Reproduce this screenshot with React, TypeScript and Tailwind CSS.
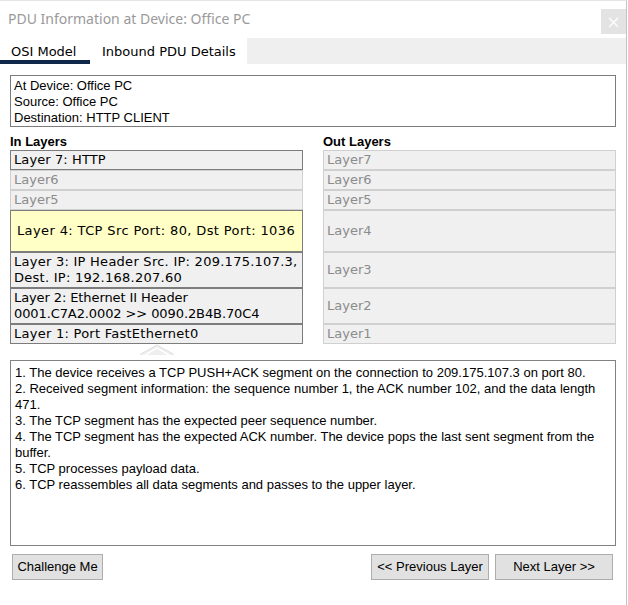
import React from "react";

const inLayers = [
  { h: "h-[20px]", text: ["Layer 7: HTTP"], active: true, track: "tracking-[0.1px]" },
  { h: "h-[20px]", text: ["Layer6"], active: false, track: "" },
  { h: "h-[20px]", text: ["Layer5"], active: false, track: "" },
  { h: "h-[42px]", text: ["Layer 4: TCP Src Port: 80, Dst Port: 1036"], active: true, current: true, track: "tracking-[0.38px]" },
  { h: "h-[36px]", text: ["Layer 3: IP Header Src. IP: 209.175.107.3,", "Dest. IP: 192.168.207.60"], active: true, track: "tracking-[0.26px]" },
  { h: "h-[36px]", text: ["Layer 2: Ethernet II Header", "0001.C7A2.0002 >> 0090.2B4B.70C4"], active: true, track: "tracking-[-0.1px]" },
  { h: "h-[20px]", text: ["Layer 1: Port FastEthernet0"], active: true, track: "tracking-[0.26px]" },
];

const outLayers = [
  { h: "h-[20px]", label: "Layer7" },
  { h: "h-[20px]", label: "Layer6" },
  { h: "h-[20px]", label: "Layer5" },
  { h: "h-[42px]", label: "Layer4" },
  { h: "h-[36px]", label: "Layer3" },
  { h: "h-[36px]", label: "Layer2" },
  { h: "h-[20px]", label: "Layer1" },
];

const steps = [
  "1. The device receives a TCP PUSH+ACK segment on the connection to 209.175.107.3 on port 80.",
  "2. Received segment information: the sequence number 1, the ACK number 102, and the data length 471.",
  "3. The TCP segment has the expected peer sequence number.",
  "4. The TCP segment has the expected ACK number. The device pops the last sent segment from the buffer.",
  "5. TCP processes payload data.",
  "6. TCP reassembles all data segments and passes to the upper layer.",
];

const arial = "font-['Liberation_Sans',Arial,sans-serif]";
const verdana = "font-['DejaVu_Sans',Verdana,sans-serif]";

export default function App() {
  return (
    <div className="w-[628px] h-[605px] bg-white overflow-hidden">
      <div className="w-[627px] h-[605px] border-r border-[#c4c4c4] border-t border-t-[#e6e6e6] bg-white flex flex-col">
        {/* Title bar */}
        <div className="h-[37px] flex items-start justify-between">
          <span className="pl-[8px] pt-[8px] text-[14px] leading-[20px] text-[#9a9a9a] font-['Noto_Sans',sans-serif]">
            PDU Information at Device: Office PC
          </span>
          <div className="mt-[8px] w-[25px] h-[25px] bg-[#e3e3e3] flex items-center justify-center text-[#fafafa] text-[18px] leading-none font-['DejaVu_Sans',sans-serif]">
            ×
          </div>
        </div>

        {/* Tabs */}
        <div className={`h-[26px] flex bg-[#efefef] ${verdana} text-[13px] text-black`}>
          <div className="w-[90px] bg-white flex flex-col">
            <span className="pl-[11px] pt-[6px] leading-[16px] flex-1">OSI Model</span>
            <div className="h-[4px] bg-[#0f2748]" />
          </div>
          <div className="w-[157px] bg-white pl-[12px] pt-[6px] leading-[16px]">Inbound PDU Details</div>
        </div>

        {/* Info box */}
        <div className={`mt-[11px] ml-[10px] w-[606px] h-[52px] border border-[#7c7c7c] pl-[3px] pt-[2px] ${arial} text-[13px] leading-[16px] text-black`}>
          <div>At Device: Office PC</div>
          <div>Source: Office PC</div>
          <div>Destination: HTTP CLIENT</div>
        </div>

        {/* Layers */}
        <div className="mt-[7px] ml-[10px] flex gap-[20px]">
          <div className="w-[293px] flex flex-col">
            <div className={`${arial} font-bold text-[13px] leading-[16px] h-[16px] text-black`}>In Layers</div>
            {inLayers.map((l, i) => (
              <div
                key={i}
                className={`${l.h} border ${verdana} ${l.track} text-[13px] leading-[16px] flex flex-col justify-center ${
                  l.current
                    ? "bg-[#ffffc6] border-[#7c7c7c] text-black pl-[6px]"
                    : l.active
                    ? "bg-[#f0f0f0] border-[#7c7c7c] text-black pl-[3px]"
                    : "bg-[#f0f0f0] border-[#d0d0d0] text-[#8c8c8c] pl-[3px]"
                }`}
              >
                {l.text.map((t) => (
                  <span key={t} className="whitespace-nowrap">
                    {t}
                  </span>
                ))}
              </div>
            ))}
            <div className="h-[11px] flex justify-center">
              <svg width="34" height="11" viewBox="0 0 34 11">
                <polygon points="0,11 17,1 34,11" fill="#eeeeee" />
                <polyline points="0,10.5 17,1 34,10.5" fill="none" stroke="#dddddd" strokeWidth="1" />
                <polyline points="5,11 17,4 29,11" fill="none" stroke="#ffffff" strokeWidth="1.5" />
              </svg>
            </div>
          </div>
          <div className="w-[293px] flex flex-col">
            <div className={`${arial} font-bold text-[13px] leading-[16px] h-[16px] text-black`}>Out Layers</div>
            {outLayers.map((l) => (
              <div
                key={l.label}
                className={`${l.h} border border-[#d0d0d0] bg-[#f0f0f0] ${verdana} text-[13px] leading-[16px] text-[#8c8c8c] pl-[3px] flex items-center`}
              >
                {l.label}
              </div>
            ))}
          </div>
        </div>

        {/* Description */}
        <div className={`mt-[5px] ml-[10px] w-[606px] h-[186px] border border-[#828282] pl-[4px] pr-[4px] pt-[4px] ${arial} text-[13px] leading-[16px] text-black`}>
          {steps.map((s) => (
            <div key={s}>{s}</div>
          ))}
        </div>

        {/* Buttons */}
        <div className={`mt-[8px] ml-[12px] mr-[13px] flex ${arial} text-[13px] text-black`}>
          <button className="w-[91px] h-[26px] bg-[#e1e1e1] border border-[#adadad]">Challenge Me</button>
          <div className="flex-1" />
          <button className="w-[118px] h-[26px] bg-[#e1e1e1] border border-[#adadad]">&lt;&lt; Previous Layer</button>
          <button className="ml-[6px] w-[118px] h-[26px] bg-[#e1e1e1] border border-[#adadad]">Next Layer &gt;&gt;</button>
        </div>
      </div>
    </div>
  );
}
